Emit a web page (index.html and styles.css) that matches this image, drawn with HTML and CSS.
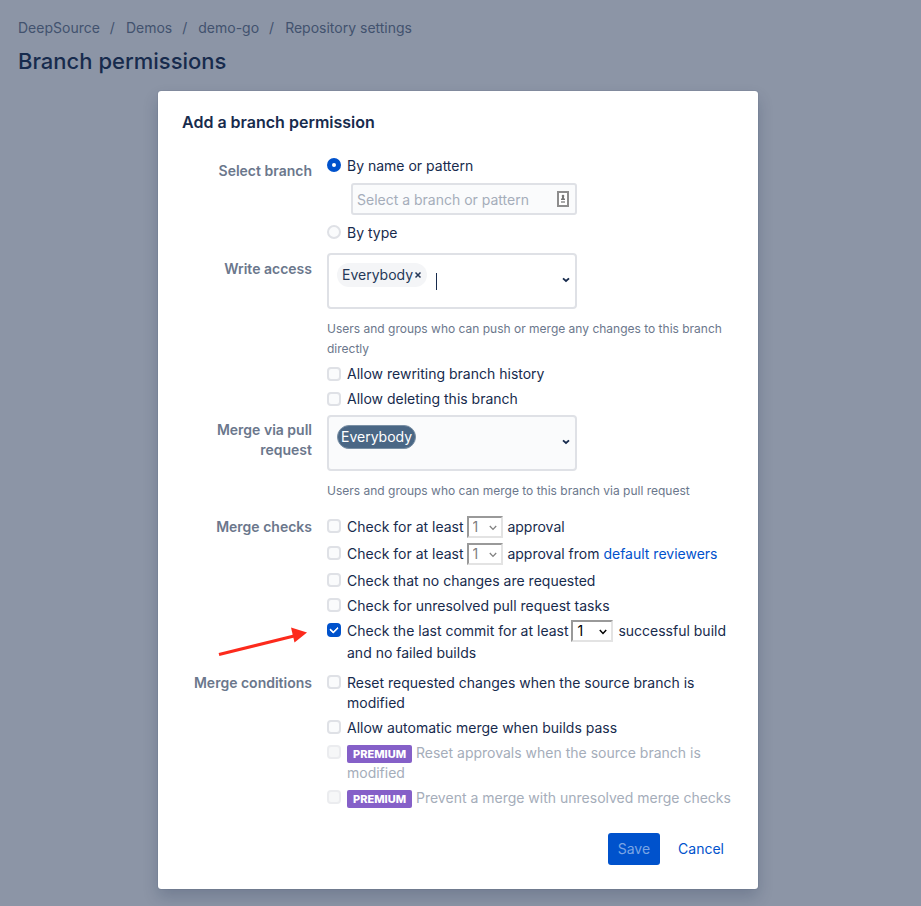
FILE: index.html
```html
<!DOCTYPE html>
<html lang="en">
<head>
<meta charset="utf-8">
<meta name="viewport" content="width=device-width, initial-scale=1">
<title>Branch permissions</title>
<link rel="stylesheet" href="styles.css">
</head>
<body>
<header class="page-header">
  <nav aria-label="Breadcrumbs">
    <ol class="breadcrumbs">
      <li><a href="#">DeepSource</a></li>
      <li><a href="#">Demos</a></li>
      <li><a href="#">demo-go</a></li>
      <li><a href="#">Repository settings</a></li>
    </ol>
  </nav>
  <h1>Branch permissions</h1>
</header>
<main class="stage">
  <form class="dialog" role="dialog" aria-labelledby="dialog-title">
    <h2 id="dialog-title">Add a branch permission</h2>

    <div class="row row-branch" role="group" aria-labelledby="l-branch">
      <div class="row-label" id="l-branch">Select branch</div>
      <div class="field">
        <div class="option">
          <input type="radio" name="kind" id="by-name" checked>
          <label for="by-name">By name or pattern</label>
        </div>
        <div class="pattern">
          <input type="text" aria-label="Branch or pattern" placeholder="Select a branch or pattern">
          <svg class="autofill" width="12" height="16" viewBox="0 0 12 16" aria-hidden="true">
            <rect x="1" y="1" width="10" height="14" fill="#fff" stroke="#8d8d8d" stroke-width="2"/>
            <circle cx="6" cy="5" r="1.3" fill="#777"/>
            <path d="M5 5h2v2l1 1v1H4V8l1-1z" fill="#777"/>
            <path d="M4 10h4v2H4z" fill="#aaa"/>
          </svg>
        </div>
        <div class="option">
          <input type="radio" name="kind" id="by-type">
          <label for="by-type">By type</label>
        </div>
      </div>
    </div>

    <div class="row row-write">
      <label class="row-label" for="write">Write access</label>
      <div class="field">
        <div class="picker picker-active">
          <span class="chip">Everybody<button type="button" class="chip-remove" aria-label="Remove Everybody"><svg width="8" height="8" viewBox="0 0 8 8" aria-hidden="true"><path d="M1.5 1.5l5 5M6.5 1.5l-5 5" stroke="#253858" stroke-width="1.5"/></svg></button></span>
          <span class="caret"></span>
          <input type="text" id="write">
          <svg class="chevron" width="8" height="6" viewBox="0 0 8 6" aria-hidden="true"><path d="M1 1.3l3 2.7 3-2.7" fill="none" stroke="#172b4d" stroke-width="1.8"/></svg>
        </div>
        <p class="hint">Users and groups who can push or merge any changes to this branch directly</p>
        <div class="option"><input type="checkbox" id="c1"><label for="c1">Allow rewriting branch history</label></div>
        <div class="option"><input type="checkbox" id="c2"><label for="c2">Allow deleting this branch</label></div>
      </div>
    </div>

    <div class="row row-merge">
      <label class="row-label" for="merge">Merge via pull request</label>
      <div class="field">
        <div class="picker">
          <span class="chip chip-selected">Everybody</span>
          <input type="text" id="merge">
          <svg class="chevron" width="8" height="6" viewBox="0 0 8 6" aria-hidden="true"><path d="M1 1.3l3 2.7 3-2.7" fill="none" stroke="#172b4d" stroke-width="1.8"/></svg>
        </div>
        <p class="hint">Users and groups who can merge to this branch via pull request</p>
      </div>
    </div>

    <div class="row row-checks" role="group" aria-labelledby="l-checks">
      <div class="row-label" id="l-checks">Merge checks</div>
      <div class="field">
        <div class="option with-count">
          <input type="checkbox" id="c3">
          <div><label for="c3">Check for at least</label> <span class="count"><select aria-label="Approvals" disabled><option>1</option></select><svg width="8" height="6" viewBox="0 0 8 6" aria-hidden="true"><path d="M.8 1l3.2 3.4L7.2 1" fill="none" stroke="currentColor" stroke-width="1.3"/></svg></span> approval</div>
        </div>
        <div class="option with-count">
          <input type="checkbox" id="c4">
          <div><label for="c4">Check for at least</label> <span class="count"><select aria-label="Default reviewer approvals" disabled><option>1</option></select><svg width="8" height="6" viewBox="0 0 8 6" aria-hidden="true"><path d="M.8 1l3.2 3.4L7.2 1" fill="none" stroke="currentColor" stroke-width="1.3"/></svg></span> approval from <a href="#">default reviewers</a></div>
        </div>
        <div class="option"><input type="checkbox" id="c5"><label for="c5">Check that no changes are requested</label></div>
        <div class="option"><input type="checkbox" id="c6"><label for="c6">Check for unresolved pull request tasks</label></div>
        <div class="option with-count">
          <svg class="pointer" width="92" height="32" viewBox="0 0 92 32" aria-hidden="true"><path d="M2 28.5L77 10" stroke="#fc2a1c" stroke-width="3"/><path d="M74 1.500L90 6.500 77.500 16.500z" fill="#fc2a1c"/></svg>
          <input type="checkbox" id="c7" checked>
          <div><label for="c7">Check the last commit for at least</label> <span class="count count-wide"><select aria-label="Successful builds"><option>1</option></select><svg width="8" height="6" viewBox="0 0 8 6" aria-hidden="true"><path d="M.8 1l3.2 3.4L7.2 1" fill="none" stroke="currentColor" stroke-width="1.500"/></svg></span> successful build and no failed builds</div>
        </div>
      </div>
    </div>

    <div class="row" role="group" aria-labelledby="l-cond">
      <div class="row-label" id="l-cond">Merge conditions</div>
      <div class="field">
        <div class="option"><input type="checkbox" id="c8"><label for="c8">Reset requested changes when the source branch is modified</label></div>
        <div class="option"><input type="checkbox" id="c9"><label for="c9">Allow automatic merge when builds pass</label></div>
        <div class="option disabled"><input type="checkbox" id="c10" disabled><label for="c10"><span class="premium">PREMIUM</span> Reset approvals when the source branch is modified</label></div>
        <div class="option disabled"><input type="checkbox" id="c11" disabled><label for="c11"><span class="premium">PREMIUM</span> Prevent a merge with unresolved merge checks</label></div>
      </div>
    </div>

    <div class="actions">
      <button type="submit" class="save" disabled>Save</button>
      <button type="button" class="cancel">Cancel</button>
    </div>
  </form>
</main>
</body>
</html>
```
FILE: styles.css
```css
* { box-sizing: border-box; }
body {
  margin: 0;
  background: #8c95a6;
  color: #172b4d;
  font: 14px/20px Inter, "Liberation Sans", sans-serif;
}
h1, h2, p, ol { margin: 0; padding: 0; }
a { color: #0052cc; text-decoration: none; }
input, select, button { font: inherit; margin: 0; }

.page-header { padding: 18px 18px 16px; }
.breadcrumbs { display: flex; list-style: none; }
.breadcrumbs a { color: #42526e; }
.breadcrumbs li + li::before { content: "/"; padding: 0 11px 0 10px; color: #42526e; }
h1 { margin-top: 9px; font-size: 22px; line-height: 28px; font-weight: 500; }

.stage { padding: 0 5px 17px 0; }
.dialog {
  width: 100%;
  max-width: 600px;
  margin: 0 auto;
  padding: 21px 24px 24px;
  background: #fff;
  border-radius: 3px;
  box-shadow: 0 0 1px rgba(9, 30, 66, .5), 0 8px 16px rgba(9, 30, 66, .2);
}
h2 { font-size: 16px; line-height: 20px; font-weight: 600; }

.row { display: grid; grid-template-columns: 130px 1fr; column-gap: 15px; margin-top: 9px; }
.row-branch { margin-top: 24px; }
.row-branch .row-label { padding-top: 5px; }
.row-write { margin-top: 10px; }
.row-write .row-label { padding-top: 6px; }
.row-merge .row-label { padding-top: 5px; }
.row-merge { margin-top: 6px; }
.row-checks { margin-top: 15px; line-height: 22px; }
.row-label { color: #6b778c; font-weight: 600; text-align: right; }

.option { display: flex; align-items: flex-start; gap: 6px; position: relative; }
.option + .option { margin-top: 5px; }
.row-checks .option + .option { margin-top: 3px; }
.row-checks .with-count + .option { margin-top: 5px; }

input[type="checkbox"], input[type="radio"] {
  appearance: none;
  flex: none;
  display: grid;
  place-items: center;
  width: 14px;
  height: 14px;
  margin-top: 2px;
  border: 2px solid #dfe1e6;
  border-radius: 4px;
  background: #fafbfc;
}
.row-write input[type="checkbox"], .row-checks input[type="checkbox"] { margin-top: 3px; }
input[type="radio"] { border-radius: 50%; }
input[type]:checked { border-color: #0052cc; background: #0052cc; }
input[type="radio"]:checked::before { content: ""; width: 4px; height: 4px; border-radius: 50%; background: #fff; }
input[type="checkbox"]:checked::before {
  content: "";
  width: 6px;
  height: 4px;
  margin-bottom: 2px;
  border: solid #fff;
  border-width: 0 0 2px 2px;
  border-radius: 1px;
  transform: rotate(-45deg);
}

.pattern {
  display: flex;
  align-items: center;
  max-width: 226px;
  height: 32px;
  margin: 7px 0 8px 24px;
  padding: 0 6px 0 4px;
  border: 2px solid #dfe1e6;
  border-radius: 3px;
  background: #fafbfc;
}
.pattern input, .picker input { flex: 1; min-width: 0; padding: 0; border: 0; outline: 0; background: none; }
.pattern input { padding-top: 2px; }
.pattern input::placeholder { color: #a5adba; opacity: 1; }

.picker {
  display: flex;
  align-items: flex-start;
  max-width: 250px;
  height: 56px;
  padding: 8px 5px 0 8px;
  border: 2px solid #dfe1e6;
  border-radius: 4px;
  background: #fafbfc;
}
.picker-active { background: #fff; }
.chip {
  display: flex;
  align-items: center;
  height: 24px;
  padding: 0 5px;
  border-radius: 12px;
  background: #f4f5f7;
  color: #253858;
}
.chip-selected { padding: 0 3px; border: 1px solid #7a90a5; background: #4a6785; color: #fff; }
.chip-remove { display: flex; padding: 0; margin-left: 1px; border: 0; background: none; }
.caret { width: 1px; height: 17px; margin: 10px 0 0 9px; background: #172b4d; }
.chevron { margin-top: 14px; }
.hint { margin: 10px 0 5px; color: #6b778c; font-size: 12px; }
.row-merge .hint { margin-bottom: 0; }

.count { position: relative; display: inline-block; vertical-align: top; width: 36px; height: 22px; color: #808080; margin: 0 1px 0 -1px; }
.count select {
  appearance: none;
  display: block;
  width: 100%;
  height: 22px;
  padding: 0 0 0 4px;
  border: 2px solid;
  border-color: #999 #e3e3e3 #e3e3e3 #999;
  border-radius: 0;
  background: #fff;
  color: inherit;
  opacity: 1;
  line-height: 18px;
}
.count svg { position: absolute; right: 6px; top: 9px; pointer-events: none; }
.count-wide { width: 42px; color: #000; }
.pointer { position: absolute; left: -110px; top: 6px; }

.disabled { color: #a5adba; }
.disabled input { opacity: .6; background: #f1f2f4; }
.premium {
  display: inline-block;
  padding: 0 6px;
  border-radius: 2px;
  background: #8560c8;
  color: #fff;
  font-size: 11px;
  line-height: 18px;
  font-weight: 800;
}

.actions { display: flex; justify-content: flex-end; gap: 8px; margin-top: 25px; }
.actions button { height: 32px; padding: 0 10px; border: 0; border-radius: 3px; font-weight: 400; }
.save { background: #0052cc; color: #7aa5e4; }
.cancel { background: none; color: #0052cc; }
```
